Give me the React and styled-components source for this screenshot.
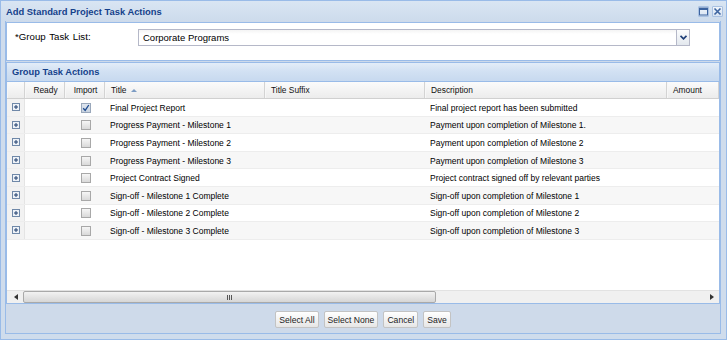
import React from "react";
import styled, { createGlobalStyle } from "styled-components";

const GlobalStyle = createGlobalStyle`
  html, body {
    margin: 0;
    padding: 0;
    background: #ffffff;
  }
  body {
    font-family: "Liberation Sans", Arial, sans-serif;
  }
  * {
    box-sizing: border-box;
  }
`;

const COLUMNS = "18px 40px 40px 160px 160px 242px 1fr";

const rows = [
  { title: "Final Project Report", desc: "Final project report has been submitted", checked: true },
  { title: "Progress Payment - Milestone 1", desc: "Payment upon completion of Milestone 1." },
  { title: "Progress Payment - Milestone 2", desc: "Payment upon completion of Milestone 2" },
  { title: "Progress Payment - Milestone 3", desc: "Payment upon completion of Milestone 3" },
  { title: "Project Contract Signed", desc: "Project contract signed off by relevant parties" },
  { title: "Sign-off - Milestone 1 Complete", desc: "Sign-off upon completion of Milestone 1" },
  { title: "Sign-off - Milestone 2 Complete", desc: "Sign-off upon completion of Milestone 2" },
  { title: "Sign-off - Milestone 3 Complete", desc: "Sign-off upon completion of Milestone 3" },
];

const PlusIcon = () => (
  <svg width="8" height="8" viewBox="0 0 8 8">
    <rect x="0.5" y="0.5" width="7" height="7" fill="#eef2f7" stroke="#6f88a8" />
    <path d="M2 4h4M4 2v4" stroke="#1f3f6e" strokeWidth="1" />
  </svg>
);

const CheckMark = () => (
  <svg width="8" height="8" viewBox="0 0 8 8">
    <path d="M1.2 4.2 L3.2 6.4 L6.8 1" fill="none" stroke="#1d4a8f" strokeWidth="1.3" />
  </svg>
);

const App = () => {
  return (
    <>
      <GlobalStyle />
      <Window>
        <TitleBar>
          <TitleText>Add Standard Project Task Actions</TitleText>
          <Tools>
            <ToolButton>
              <svg width="9" height="9" viewBox="0 0 9 9">
                <rect x="0.5" y="1" width="8" height="7" fill="none" stroke="#3d64a0" />
                <rect x="0.5" y="1" width="8" height="2" fill="#3d64a0" />
              </svg>
            </ToolButton>
            <ToolButton>
              <svg width="9" height="9" viewBox="0 0 9 9">
                <path d="M1.5 1.5 L7.5 7.5 M7.5 1.5 L1.5 7.5" stroke="#3d64a0" strokeWidth="1.6" />
              </svg>
            </ToolButton>
          </Tools>
        </TitleBar>
        <Frame>
          <Body>
            <FormPanel>
              <FieldLabel>*Group Task List:</FieldLabel>
              <Combo>
                <ComboInput>Corporate Programs</ComboInput>
                <ComboTrigger>
                  <svg width="7" height="5" viewBox="0 0 7 5">
                    <path d="M0.5 0.8 L3.5 3.8 L6.5 0.8" fill="none" stroke="#1e3f78" strokeWidth="1.8" />
                  </svg>
                </ComboTrigger>
              </Combo>
            </FormPanel>

            <GridPanel>
              <PanelHeader>Group Task Actions</PanelHeader>
              <HeaderRow>
                <HeaderCell />
                <HeaderCell $align="center">Ready</HeaderCell>
                <HeaderCell $align="center">Import</HeaderCell>
                <HeaderCell>
                  Title
                  <SortArrow />
                </HeaderCell>
                <HeaderCell>Title Suffix</HeaderCell>
                <HeaderCell>Description</HeaderCell>
                <HeaderCell>Amount</HeaderCell>
              </HeaderRow>
              <RowList>
                {rows.map((row, i) => (
                  <Row key={row.title} $alt={i % 2 === 1}>
                    <ExpanderCell>
                      <PlusIcon />
                    </ExpanderCell>
                    <Cell />
                    <Cell $align="center">
                      <CheckBox $checked={row.checked}>{row.checked && <CheckMark />}</CheckBox>
                    </Cell>
                    <Cell>{row.title}</Cell>
                    <Cell />
                    <Cell>{row.desc}</Cell>
                    <Cell />
                  </Row>
                ))}
              </RowList>
              <ScrollBar>
                <ScrollArrow>
                  <svg width="4" height="6" viewBox="0 0 4 6">
                    <path d="M4 0 L0 3 L4 6 Z" fill="#333" />
                  </svg>
                </ScrollArrow>
                <ScrollThumb>
                  <Gripper>
                    <span />
                    <span />
                    <span />
                  </Gripper>
                </ScrollThumb>
                <ScrollTrack />
                <ScrollArrow>
                  <svg width="4" height="6" viewBox="0 0 4 6">
                    <path d="M0 0 L4 3 L0 6 Z" fill="#333" />
                  </svg>
                </ScrollArrow>
              </ScrollBar>
            </GridPanel>

            <ButtonBar>
              <Button>Select All</Button>
              <Button>Select None</Button>
              <Button>Cancel</Button>
              <Button>Save</Button>
            </ButtonBar>
          </Body>
        </Frame>
      </Window>
    </>
  );
};

const Window = styled.div`
  width: 727px;
  height: 340px;
  border: 1px solid #99bbe8;
  background: #cfdcec;
  display: flex;
  flex-direction: column;
  overflow: hidden;
`;

const TitleBar = styled.div`
  height: 20px;
  display: flex;
  align-items: center;
  justify-content: space-between;
  padding: 0 3px 0 5px;
  background: linear-gradient(#d9e5f3, #cddbec);
`;

const TitleText = styled.div`
  font-size: 9.4px;
  font-weight: bold;
  color: #15428b;
`;

const Tools = styled.div`
  display: flex;
  gap: 3px;
`;

const ToolButton = styled.div`
  width: 11px;
  height: 11px;
  display: flex;
  align-items: center;
  justify-content: center;
  background: linear-gradient(#f0f5fb, #d7e3f2);
  border: 1px solid #a9c1e2;
  border-radius: 1px;
`;

const Frame = styled.div`
  flex: 1;
  display: flex;
  padding: 0 5px 5px 4px;
`;

const Body = styled.div`
  flex: 1;
  display: flex;
  flex-direction: column;
  border: 1px solid #99bbe8;
  border-top: none;
  background: #cedaea;
`;

const FormPanel = styled.div`
  margin-top: 1px;
  height: 39px;
  display: flex;
  align-items: flex-start;
  padding: 6px 0 0 8px;
  background: #ffffff;
  border: 1px solid #99bbe8;
`;

const FieldLabel = styled.div`
  width: 123px;
  padding-top: 2px;
  font-size: 9.7px;
  word-spacing: 1px;
  color: #000;
`;

const Combo = styled.div`
  display: flex;
  height: 17px;
`;

const ComboInput = styled.div`
  width: 538px;
  height: 17px;
  display: flex;
  align-items: center;
  padding-left: 4px;
  font-size: 9.5px;
  color: #000;
  background: linear-gradient(#f4f4f4, #ffffff 4px);
  border: 1px solid #b5b8c8;
  border-right: none;
`;

const ComboTrigger = styled.div`
  width: 14px;
  height: 17px;
  display: flex;
  align-items: center;
  justify-content: center;
  background: linear-gradient(#fbfcfd, #e3e8ee);
  border: 1px solid #b5b8c8;
`;

const GridPanel = styled.div`
  margin-top: 1px;
  height: 242px;
  display: flex;
  flex-direction: column;
  background: #ffffff;
  border: 1px solid #99bbe8;
  overflow: hidden;
`;

const PanelHeader = styled.div`
  height: 19px;
  flex-shrink: 0;
  display: flex;
  align-items: center;
  padding-left: 5px;
  font-size: 9.3px;
  font-weight: bold;
  color: #15428b;
  background: linear-gradient(#e3edf8, #d2e1f3 45%, #c7d9ef);
  border-bottom: 1px solid #99bbe8;
`;

const HeaderRow = styled.div`
  height: 17px;
  flex-shrink: 0;
  display: grid;
  grid-template-columns: ${COLUMNS};
  background: linear-gradient(#fbfbfb, #ececec);
  border-bottom: 1px solid #d0d0d0;
`;

const HeaderCell = styled.div`
  display: flex;
  align-items: center;
  justify-content: ${(p) => (p.$align === "center" ? "center" : "flex-start")};
  padding: 0 4px 0 5px;
  font-size: 8.4px;
  color: #111;
  white-space: nowrap;
  overflow: hidden;
  border-left: 1px solid #f7f7f7;
  border-right: 1px solid #d3d3d3;
`;

const SortArrow = styled.span`
  margin-left: 4px;
  width: 0;
  height: 0;
  border-left: 3px solid transparent;
  border-right: 3px solid transparent;
  border-bottom: 3px solid #7d9cc3;
`;

const RowList = styled.div`
  flex: 1;
  overflow: hidden;
`;

const Row = styled.div`
  height: 17.6px;
  display: grid;
  grid-template-columns: ${COLUMNS};
  background: ${(p) => (p.$alt ? "#f7f7f7" : "#ffffff")};
  border-bottom: 1px solid #ededed;
`;

const Cell = styled.div`
  display: flex;
  align-items: center;
  justify-content: ${(p) => (p.$align === "center" ? "center" : "flex-start")};
  padding: 1px 4px 0 5px;
  font-size: 8.5px;
  color: #000;
  white-space: nowrap;
  overflow: hidden;
`;

const ExpanderCell = styled.div`
  display: flex;
  align-items: center;
  justify-content: center;
  background: #f2f2f2;
  border-right: 1px solid #e4e4e4;
`;

const CheckBox = styled.div`
  width: 10px;
  height: 10px;
  display: flex;
  align-items: center;
  justify-content: center;
  border: 1px solid ${(p) => (p.$checked ? "#9aa8bb" : "#a8a8a8")};
  background: ${(p) =>
    p.$checked ? "linear-gradient(#dfe6ef, #c9d3e0)" : "linear-gradient(#f6f6f6, #d9d9d9)"};
`;

const ScrollBar = styled.div`
  height: 13px;
  flex-shrink: 0;
  display: flex;
  align-items: stretch;
  padding-left: 1px;
  background: #f0f0f0;
  border-top: 1px solid #e2e2e2;
`;

const ScrollArrow = styled.div`
  width: 15px;
  display: flex;
  align-items: center;
  justify-content: center;
`;

const ScrollThumb = styled.div`
  width: 413px;
  display: flex;
  align-items: center;
  justify-content: center;
  background: linear-gradient(#f2f2f2, #d6d6d6);
  border: 1px solid #a9a9a9;
  border-radius: 2px;
`;

const Gripper = styled.div`
  display: flex;
  gap: 1px;

  span {
    width: 1px;
    height: 5px;
    background: #555;
  }
`;

const ScrollTrack = styled.div`
  flex: 1;
`;

const ButtonBar = styled.div`
  flex: 1;
  display: flex;
  justify-content: center;
  align-items: flex-start;
  gap: 5px;
  padding-top: 7px;
`;

const Button = styled.div`
  height: 17px;
  display: flex;
  align-items: center;
  padding: 0 3px;
  font-size: 8.6px;
  color: #222;
  background: linear-gradient(#ffffff, #e6e6e6);
  border: 1px solid #c3c3c3;
  border-radius: 2px;
`;

export default App;
